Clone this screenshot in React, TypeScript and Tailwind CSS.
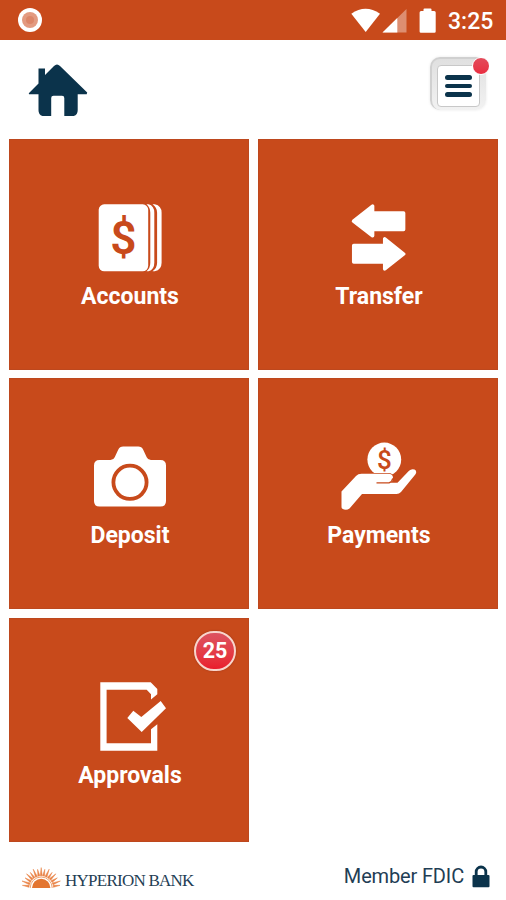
import type { ReactNode } from 'react';

type Tile = {
  name: string;
  icon: ReactNode;
  badge?: number;
};

const AccountsIcon = () => (
  <svg width="120" height="90" viewBox="0 0 120 90" fill="#fff">
    <path d="M83.500 14.300h2.300q6.800 1.500 6.800 8.500v50q0 7-6.800 8.500h-2.300q4.600-3 4.600-8.500v-50q0-5.500-4.600-8.500z" />
    <path d="M77.500 14.300h2q5.800 1.500 5.800 8.500v50q0 7-5.800 8.500h-2q3.800-3 3.800-8.500v-50q0-5.500-3.800-8.500z" />
    <rect x="29.700" y="14.300" width="49.500" height="67" rx="5.500" />
    <text x="54.500" y="64.300" textAnchor="middle" fill="#c84a1b" className="font-['Roboto',sans-serif] text-[46px] font-semibold">$</text>
  </svg>
);

const TransferIcon = () => (
  <svg width="120" height="90" viewBox="0 0 120 90" fill="#fff" stroke="#fff" strokeWidth="3.500" strokeLinejoin="round">
    <path d="M35.500 31.200 54.600 16v7h31v16.600h-31v6.200z" />
    <path d="M85.700 64 66.700 48.900v6.500h-31v16.600h31v7z" />
  </svg>
);

const DepositIcon = () => (
  <svg width="120" height="90" viewBox="0 0 120 90" fill="#fff">
    <path d="M30.500 31h11q3 0 4.200-2.800l3.500-7.500q1.500-3.200 5-3.200h15q3.500 0 5 3.200l3.500 7.500q1.200 2.800 4.200 2.800h9.600q5.500 0 5.500 5.500v35.500q0 5.500-5.500 5.500h-61q-5.500 0-5.500-5.500v-35.500q0-5.500 5.500-5.500z" />
    <circle cx="61" cy="53.300" r="16.600" fill="none" stroke="#c84a1b" strokeWidth="3.800" />
  </svg>
);

const PaymentsIcon = () => (
  <svg width="120" height="90" viewBox="0 0 120 90" fill="#fff">
    <circle cx="66.300" cy="30.500" r="16.900" />
    <text x="66.300" y="40" textAnchor="middle" fill="#c84a1b" className="font-['Roboto',sans-serif] text-[26px] font-medium">$</text>
    <path
      d="M23.500 62.500 38 47q2-2.200 5.500-2.200h26.500q5 0 5 4.200 0 3.500-2.500 4.700h7L91 41.700q2.500-2.300 5.500-1.200 3 1.700.8 5L83 63q-1.800 2-4.500 2H44L31.500 79.500q-3.500 2.500-7.500 0-.5-.5-.5-2z"
      stroke="#c84a1b"
      strokeWidth="1.500"
      paintOrder="stroke"
    />
    <path d="M58.500 53.900h12.500q3.300-1.200 3.700-4.500" fill="none" stroke="#c84a1b" strokeWidth="1.200" />
  </svg>
);

const ApprovalsIcon = () => (
  <svg width="120" height="90" viewBox="0 0 120 90" fill="#fff">
    <path d="M31.300 13.300h50.400l6.600 6.700v5.300l-6.300 5.300v-5.300l-4.300-4.500h-40.100v53.500h44.400v-14l6.300-5v26.400h-57z" />
    <path d="m58.300 49 6-7.300 8 6.300 19.400-16 5.300 7.300-24.300 23.700z" />
  </svg>
);

const HomeIcon = () => (
  <svg width="60" height="52" viewBox="0 0 60 52" fill="#0b334b">
    <path d="M.8 29.300 10.500 19.500V4.500h6.500v6.500l9-9q3-3 6 0l27.200 26.600-.5 1.700H49.700v16q0 6-6.500 6h-6.900V34q0-2.300-2.300-2.300h-8.500q-2.300 0-2.300 2.300v18.300h-6.200q-6.500 0-6.500-6v-16H1z" />
  </svg>
);

const StatusIcons = () => (
  <svg width="90" height="30" viewBox="0 0 90 30" fill="#fff">
    <path d="M1.300 8.800Q15.500-1.200 30 8.800L15.700 27z" />
    <path d="M56.500 4v23.500h-24z" fillOpacity=".38" />
    <path d="M47.300 13v14.500h-14.800z" />
    <path d="M74.500 3.500h6q1 0 1 1v1.500h2.700q1.500 0 1.500 1.500v19q0 1.300-1.300 1.300h-13.500q-1.300 0-1.300-1.300v-19q0-1.500 1.500-1.500h2.400v-1.500q0-1 1-1z" />
  </svg>
);

const rays = [-82, -70, -58, -46, -35, -23, -11, 0, 11, 23, 35, 46, 58, 70, 82];

const SunLogo = () => (
  <svg width="43" height="22" viewBox="0 0 43 22">
    <path d="M12 21a9.200 9.200 0 0 1 18.400 0z" fill="#e37530" />
    <path d="M10.200 21a11 11 0 0 1 22 0" fill="none" stroke="#efa675" strokeWidth="1" />
    {rays.map((angle, i) => (
      <path
        key={angle}
        d={i % 2 ? 'M20.200 8.800 21.200.6 22.200 8.800z' : 'M20.200 8.800 21.200 2 22.200 8.800z'}
        fill="#e98245"
        stroke="#e98245"
        strokeWidth=".5"
        transform={`rotate(${angle} 21.200 21)`}
      />
    ))}
  </svg>
);

const LockIcon = () => (
  <svg width="18" height="23" viewBox="0 0 18 23">
    <path d="M4.200 11V6.800a4.800 4.800 0 0 1 9.600 0V11" fill="none" stroke="#0b334b" strokeWidth="2.800" />
    <rect x=".5" y="10" width="17" height="12.300" rx="1" fill="#0b334b" />
  </svg>
);

const tiles: Tile[] = [
  { name: 'Accounts', icon: <AccountsIcon /> },
  { name: 'Transfer', icon: <TransferIcon /> },
  { name: 'Deposit', icon: <DepositIcon /> },
  { name: 'Payments', icon: <PaymentsIcon /> },
  { name: 'Approvals', icon: <ApprovalsIcon />, badge: 25 }
];

export default function App() {
  return (
    <main className="flex h-[900px] w-[506px] flex-col overflow-hidden bg-white font-['Roboto',sans-serif]">
      <div className="flex h-[39.5px] shrink-0 items-center bg-[#c84a1b] pr-[12px] pl-[18px] text-white">
        <div className="flex size-6 items-center justify-center rounded-full bg-white">
          <div className="flex size-4 items-center justify-center rounded-full bg-[#e39a80]">
            <div className="size-2 rounded-full bg-[#dc8567]" />
          </div>
        </div>
        <div className="ml-auto flex items-center">
          <StatusIcons />
          <span className="ml-[8px] w-[46px] pt-[3px] text-[23px] leading-none font-medium whitespace-nowrap">3:25</span>
        </div>
      </div>

      <header className="flex h-[99.500px] shrink-0 items-start justify-between pr-[20px] pl-[28px]">
        <div className="pt-[24px]">
          <HomeIcon />
        </div>
        <button className="relative mt-[17.500px] h-[53px] w-[56px] rounded-[10px] border-t-2 border-l-2 border-[#d0d0d0] bg-linear-to-b from-[#e0e0e0] to-[#f2f2f2] pt-[3px] pl-[5px] shadow-[0_0_3px_#e8e8e8]">
          <div className="flex h-[42px] w-[43px] flex-col items-center justify-center gap-[4px] rounded-[4px] border border-[#c8c8c8] bg-white">
            <span className="h-[4.500px] w-[27px] rounded-full bg-[#0b334b]" />
            <span className="h-[4.500px] w-[27px] rounded-full bg-[#0b334b]" />
            <span className="h-[4.500px] w-[27px] rounded-full bg-[#0b334b]" />
          </div>
          <span className="absolute -top-[2px] -right-[4px] size-[18px] rounded-full border border-white bg-linear-to-b from-[#e34a5a] to-[#e92c40]" />
        </button>
      </header>

      <div className="grid shrink-0 grid-cols-[240px_240px] grid-rows-[231px_231px_224px] gap-x-[9px] gap-y-[8.400px] pl-[9px]">
        {tiles.map((tile) => (
          <div key={tile.name} className="relative flex flex-col items-center border border-[#bd481e] bg-[#c84a1b] pt-[50px] text-white">
            {tile.icon}
            <span className="mt-[3px] pl-[2px] text-[23px] leading-[28px] font-bold">{tile.name}</span>
            {tile.badge && (
              <span className="absolute top-[12px] right-[12px] flex h-[40px] w-[42px] items-center justify-center rounded-full border-2 border-[#f8d5cc] bg-linear-to-b from-[#dc5260] to-[#e91c2c] text-[21.500px] font-bold shadow-[0_0_2px_#94331b]">
                {tile.badge}
              </span>
            )}
          </div>
        ))}
      </div>

      <footer className="flex grow items-start justify-between pr-[16px] pl-[20px] text-[#1f3e55]">
        <div className="flex items-center pt-[23px]">
          <SunLogo />
          <span className="ml-[2px] pt-[6px] font-['Liberation_Serif',serif] text-[17px] leading-[20px] tracking-[-0.75px] whitespace-nowrap">HYPERION BANK</span>
        </div>
        <div className="flex items-center pt-[23px]">
          <span className="text-[20px] leading-[23px] tracking-[-0.15px]">Member FDIC</span>
          <span className="ml-[8px]">
            <LockIcon />
          </span>
        </div>
      </footer>
    </main>
  );
}
